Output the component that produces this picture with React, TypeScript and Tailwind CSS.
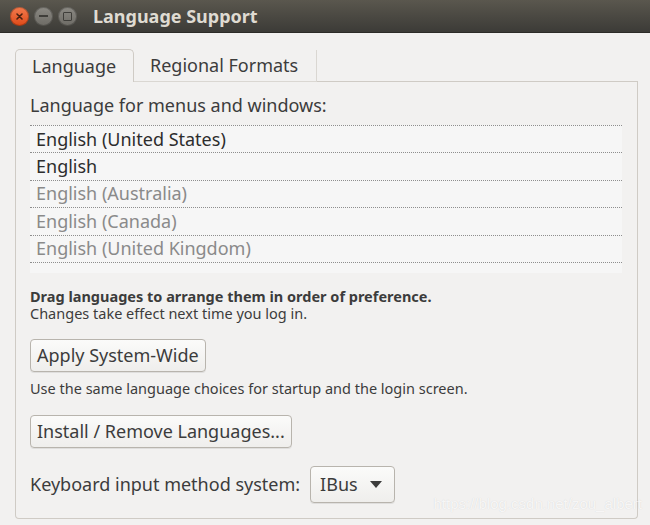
const rows = [
  { label: "English (United States)", active: true },
  { label: "English", active: true },
  { label: "English (Australia)", active: false },
  { label: "English (Canada)", active: false },
  { label: "English (United Kingdom)", active: false },
];

function WindowButton({ kind }: { kind: "close" | "min" | "max" }) {
  if (kind === "close") {
    return (
      <div className="flex h-[19px] w-[19px] items-center justify-center rounded-full bg-gradient-to-b from-[#f37a4c] to-[#dd4814] shadow-[inset_0_0_0_1px_rgba(0,0,0,0.25)]">
        <svg width="9" height="9" viewBox="0 0 9 9">
          <path d="M2 2 L7 7 M7 2 L2 7" stroke="#4a2111" strokeWidth="1.6" strokeLinecap="round" />
        </svg>
      </div>
    );
  }
  return (
    <div className="flex h-[19px] w-[19px] items-center justify-center rounded-full bg-gradient-to-b from-[#8c8a84] to-[#6d6b65] shadow-[inset_0_0_0_1px_rgba(0,0,0,0.25)]">
      {kind === "min" ? (
        <div className="h-[2px] w-[9px] bg-[#3f3e3a]" />
      ) : (
        <div className="h-[9px] w-[9px] rounded-[1px] border-[1.5px] border-[#3f3e3a]" />
      )}
    </div>
  );
}

function Button({ children }: { children: string }) {
  return (
    <button className="h-[33px] rounded-[4px] border border-[#b8b4ad] bg-gradient-to-b from-[#fbfbfa] to-[#efeeec] px-[6px] text-[18px] text-[#3c3c3c] shadow-[0_1px_0_rgba(0,0,0,0.08)]">
      {children}
    </button>
  );
}

export default function App() {
  return (
    <div
      className="relative flex h-[525px] w-[650px] flex-col overflow-hidden bg-[#f2f1f0] text-[#3c3c3c]"
      style={{ fontFamily: '"Noto Sans", "Open Sans", sans-serif' }}
    >
      <header className="flex h-[33px] shrink-0 items-center border-b border-[#2c2b28] bg-gradient-to-b from-[#5a574e] to-[#3c3b37] pl-[10px]">
        <div className="flex items-center gap-[5px]">
          <WindowButton kind="close" />
          <WindowButton kind="min" />
          <WindowButton kind="max" />
        </div>
        <span className="ml-[16px] text-[18px] font-bold text-[#dfdbd2]">Language Support</span>
      </header>

      <div className="flex flex-1 flex-col pl-[15px] pr-[12px] pt-[16px]">
        <div className="flex h-[33px] items-end">
          <div className="flex h-[33px] w-[119px] items-center rounded-t-[5px] border border-b-0 border-[#cfcbc5] bg-[#f2f1f0] pl-[16px] text-[18px] text-[#3c3c3c]">
            Language
          </div>
          <div className="flex h-[32px] w-[183px] items-center border-r border-b border-[#dad7d2] pl-[16px] text-[18px] text-[#3c3c3c]">
            Regional Formats
          </div>
          <div className="h-[32px] flex-1 border-b border-[#cfcbc5]" />
        </div>

        <section className="mb-[6px] flex flex-1 flex-col rounded-b-[4px] border border-t-0 border-[#cfcbc5] pl-[14px] pr-[15px] pt-[12px]">
          <div className="text-[18px] leading-[22px]">Language for menus and windows:</div>

          <ul className="mt-[9px] h-[148px] bg-[#f6f6f6] border-t border-dotted border-[#8e8e8e]">
            {rows.map((r) => (
              <li
                key={r.label}
                className={`flex h-[27.4px] items-center border-b border-dotted border-[#8e8e8e] pl-[6px] text-[18px] ${
                  r.active ? "text-[#2d2d2d]" : "text-[#8a8a8a]"
                }`}
              >
                {r.label}
              </li>
            ))}
          </ul>

          <div className="mt-[15px] text-[14.5px] font-bold leading-[17px]">
            Drag languages to arrange them in order of preference.
          </div>
          <div className="text-[14.5px] leading-[17px]">Changes take effect next time you log in.</div>

          <div className="mt-[17px]">
            <Button>Apply System-Wide</Button>
          </div>
          <div className="mt-[8px] text-[14.5px] leading-[17px]">
            Use the same language choices for startup and the login screen.
          </div>
          <div className="mt-[18px]">
            <Button>Install / Remove Languages...</Button>
          </div>

          <div className="mt-[18px] flex items-center gap-[10px]">
            <span className="text-[18px]">Keyboard input method system:</span>
            <button className="flex h-[37px] w-[85px] items-center justify-between rounded-[4px] border border-[#b8b4ad] bg-gradient-to-b from-[#fbfbfa] to-[#efeeec] pl-[9px] pr-[12px] text-[18px] text-[#3c3c3c] shadow-[0_1px_0_rgba(0,0,0,0.08)]">
              IBus
              <svg width="12" height="7" viewBox="0 0 12 7">
                <path d="M0 0 H12 L6 7 Z" fill="#3c3c3c" />
              </svg>
            </button>
          </div>
        </section>
      </div>

      <span
        className="absolute bottom-[10px] right-[8px] text-[15px] text-white/80"
        style={{ fontFamily: '"Liberation Sans", Arial, sans-serif', textShadow: "0 0 1px rgba(0,0,0,0.15)" }}
      >
        https://blog.csdn.net/zou_albert
      </span>
    </div>
  );
}
